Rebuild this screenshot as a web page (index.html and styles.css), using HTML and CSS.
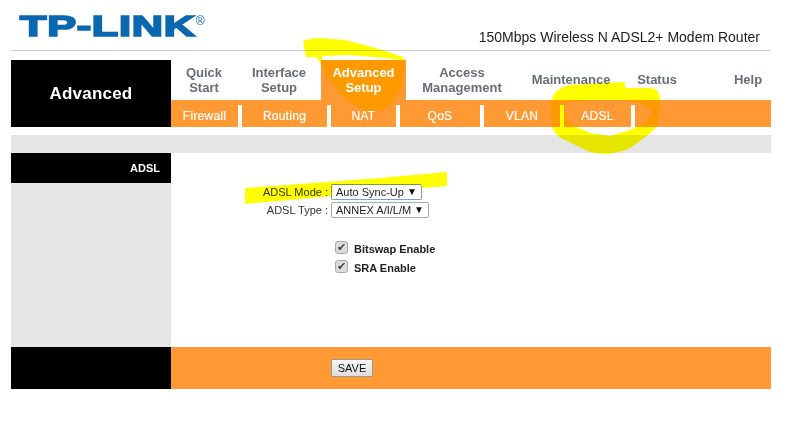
FILE: index.html
```html
<!DOCTYPE html>
<html lang="en">
<head>
<meta charset="utf-8">
<title>TP-LINK Advanced Setup</title>
<link rel="stylesheet" href="styles.css">
</head>
<body>
<div class="page">
  <header class="top">
    <div class="logo">TP-LINK<sup class="reg">®</sup></div>
    <div class="model">150Mbps Wireless N ADSL2+ Modem Router</div>
  </header>
  <div class="nav">
    <div class="nav-title">Advanced</div>
    <div class="nav-main">
      <div class="tabs">
        <a class="tab t-quick">Quick<br>Start</a>
        <a class="tab t-iface">Interface<br>Setup</a>
        <a class="tab t-adv active"><span class="tab-label">Advanced<br>Setup</span></a>
        <a class="tab t-access">Access<br>Management</a>
        <a class="tab t-maint">Maintenance</a>
        <a class="tab t-status">Status</a>
        <a class="tab t-help">Help</a>
      </div>
      <div class="subs">
        <a class="sub s-fw">Firewall</a>
        <a class="sub s-rt">Routing</a>
        <a class="sub s-nat">NAT</a>
        <a class="sub s-qos">QoS</a>
        <a class="sub s-vlan">VLAN</a>
        <a class="sub s-adsl">ADSL</a>
        <span class="sub s-rest"></span>
      </div>
    </div>
  </div>
  <div class="strip"></div>
  <div class="main">
    <aside class="side">
      <div class="side-head">ADSL</div>
      <div class="side-fill"></div>
    </aside>
    <section class="form">
      <div class="row">
        <label class="lbl">ADSL Mode&nbsp;:</label>
        <span class="sel-wrap w-mode focus"><select class="sel"><option>Auto Sync-Up</option></select></span>
      </div>
      <div class="row">
        <label class="lbl">ADSL Type&nbsp;:</label>
        <span class="sel-wrap w-type"><select class="sel"><option>ANNEX A/I/L/M</option></select></span>
      </div>
      <div class="checks">
        <label class="chk"><input type="checkbox" checked disabled><span>Bitswap Enable</span></label>
        <label class="chk"><input type="checkbox" checked disabled><span>SRA Enable</span></label>
      </div>
    </section>
  </div>
  <footer class="foot">
    <div class="foot-left"></div>
    <div class="foot-right"><button class="save" type="button">SAVE</button></div>
  </footer>
</div>
<svg class="marker" width="809" height="424" viewBox="0 0 809 424" aria-hidden="true">
  <path fill-rule="evenodd" d="M303 41 Q310 38 320 38 L345 40 Q375 47 403 57 L405 62 L402 85 Q396 102 384 109 Q375 113 364 110 Q350 104 342 95 L327 77 L320 62 L316 57 L306 57 Z M322 56 L350 55 L385 58 L400 60 L322 60 Z"/>
  <path fill-rule="evenodd" d="M551 105 Q552 88 570 85 L625 82 L625 88 L650 88 Q660 88 660 100 L658 125 Q650 135 630 148 Q610 157 590 152 L565 140 Q552 135 551 120 Z M564 103 L590 100 L625 100 L640 103 L653 112 L645 123 L630 130 L610 136 L590 133 L572 125 L564 112 Z"/>
  <path d="M245 188 L300 184 L380 178 L447 172 L447 186 L400 190 L340 195 L300 199 L245 204 Z"/>
</svg>
</body>
</html>
```
FILE: styles.css
```css
* { box-sizing: border-box; }
html, body { margin: 0; padding: 0; background: #fff; }
body { font-family: "Liberation Sans", Arial, sans-serif; color: #222; height: 424px; overflow: hidden; position: relative; }
.page { width: 760px; margin-left: 11px; }

.top { height: 51px; border-bottom: 1px solid #ccc; margin-bottom: 9px; display: flex; justify-content: space-between; align-items: flex-end; }
.logo { width: 130px; margin-left: 9px; height: 50px; line-height: 53px; font-size: 29px; font-weight: bold; color: #0a68b0; letter-spacing: 0.5px; -webkit-text-stroke: 1.7px #0a68b0; transform-origin: left center; transform: scaleX(1.49); white-space: nowrap; }
.reg { font-size: 12px; font-weight: normal; -webkit-text-stroke: 0; letter-spacing: 0; vertical-align: 11px; line-height: 0; display: inline-block; transform: scaleX(0.68); transform-origin: left center; }
.model { font-size: 14px; color: #222; padding-right: 11px; padding-bottom: 5px; white-space: nowrap; }

.nav { display: flex; height: 67px; }
.nav-title { width: 160px; background: #000; color: #fff; font-size: 17px; font-weight: bold; display: flex; align-items: center; justify-content: center; letter-spacing: 0.2px; }
.nav-main { flex: 1; display: flex; flex-direction: column; }
.tabs { display: flex; height: 40px; }
.tab { display: flex; align-items: center; justify-content: center; text-align: center; font-size: 13px; line-height: 15px; font-weight: bold; color: #686e78; padding-bottom: 1px; }
.t-quick { width: 66px; }
.t-iface { width: 84px; }
.t-adv { width: 85px; }
.t-access { width: 112px; }
.t-maint { width: 106px; }
.t-status { width: 66px; }
.t-help { width: 46px; margin-left: auto; }
.tab.active { background: #f93; color: #fff; }
.tab-label { position: relative; z-index: 2; }

.subs { display: flex; height: 27px; background: #f93; align-items: flex-end; }
.sub { height: 22px; background: #f93; color: #fff; font-size: 12px; letter-spacing: 0.25px; display: flex; align-items: center; justify-content: center; border-right: 4px solid #fff; padding-bottom: 1px; -webkit-text-stroke: 0.2px #fff; }
.s-fw { width: 71px; }
.s-rt { width: 89px; }
.s-nat { width: 69px; }
.s-qos { width: 84px; }
.s-vlan { width: 80px; }
.s-adsl { width: 71px; }
.s-rest { flex: 1; border-right: 0; }

.strip { height: 18px; background: #e5e5e5; margin-top: 8px; }

.main { display: flex; height: 194px; }
.side { width: 160px; display: flex; flex-direction: column; }
.side-head { height: 30px; background: #000; color: #fff; font-size: 11px; font-weight: bold; display: flex; align-items: center; justify-content: flex-end; padding-right: 11px; padding-bottom: 1px; }
.side-fill { flex: 1; background: #e5e5e5; }

.form { flex: 1; padding-top: 31px; }
.row { display: flex; align-items: center; height: 16px; margin-bottom: 2px; }
.lbl { width: 157px; margin-right: 3px; text-align: right; font-size: 11px; color: #333; }
.sel-wrap { position: relative; z-index: 2; display: block; height: 16px; background: #fff; border: 1px solid #a9a9a9; border-radius: 2px; }
.sel-wrap::after { content: "▼"; position: absolute; right: 4px; top: 0; font-size: 10px; line-height: 14px; color: #111; }
.w-mode { width: 91px; }
.w-type { width: 98px; }
.focus { border-color: #7fa0d0; border-top-color: #7b9a3c; border-left-color: #7b9a3c; }
.sel { appearance: none; -webkit-appearance: none; border: 0; background: transparent; width: 100%; height: 14px; padding: 0 0 0 4px; margin: 0; display: block; font-family: "Liberation Sans", Arial, sans-serif; font-size: 11px; line-height: 14px; color: #222; outline: none; }

.checks { padding: 19px 0 0 164px; }
.chk { display: flex; align-items: center; height: 19px; font-size: 11px; font-weight: bold; color: #222; }
.chk input { appearance: none; -webkit-appearance: none; width: 13px; height: 13px; margin: 0 6px 2px 0; background: #dcdcdc; border: 1px solid #aaa; border-radius: 3px; position: relative; flex: none; }
.chk input::before { content: "✔"; position: absolute; left: 1px; top: -1px; font-size: 11px; line-height: 13px; color: #444; font-family: "DejaVu Sans", sans-serif; }

.foot { display: flex; height: 42px; }
.foot-left { width: 160px; background: #000; }
.foot-right { flex: 1; background: #f93; padding: 12px 0 0 160px; }
.save { display: block; width: 42px; height: 18px; padding: 0; font-family: "Liberation Sans", Arial, sans-serif; font-size: 11px; color: #111; border: 1px solid #999; border-radius: 2px; background: linear-gradient(#f8f8f8, #dedede); }

.marker { position: absolute; left: 0; top: 0; mix-blend-mode: multiply; pointer-events: none; z-index: 1; }
.marker path { fill: #ff0; }
```
